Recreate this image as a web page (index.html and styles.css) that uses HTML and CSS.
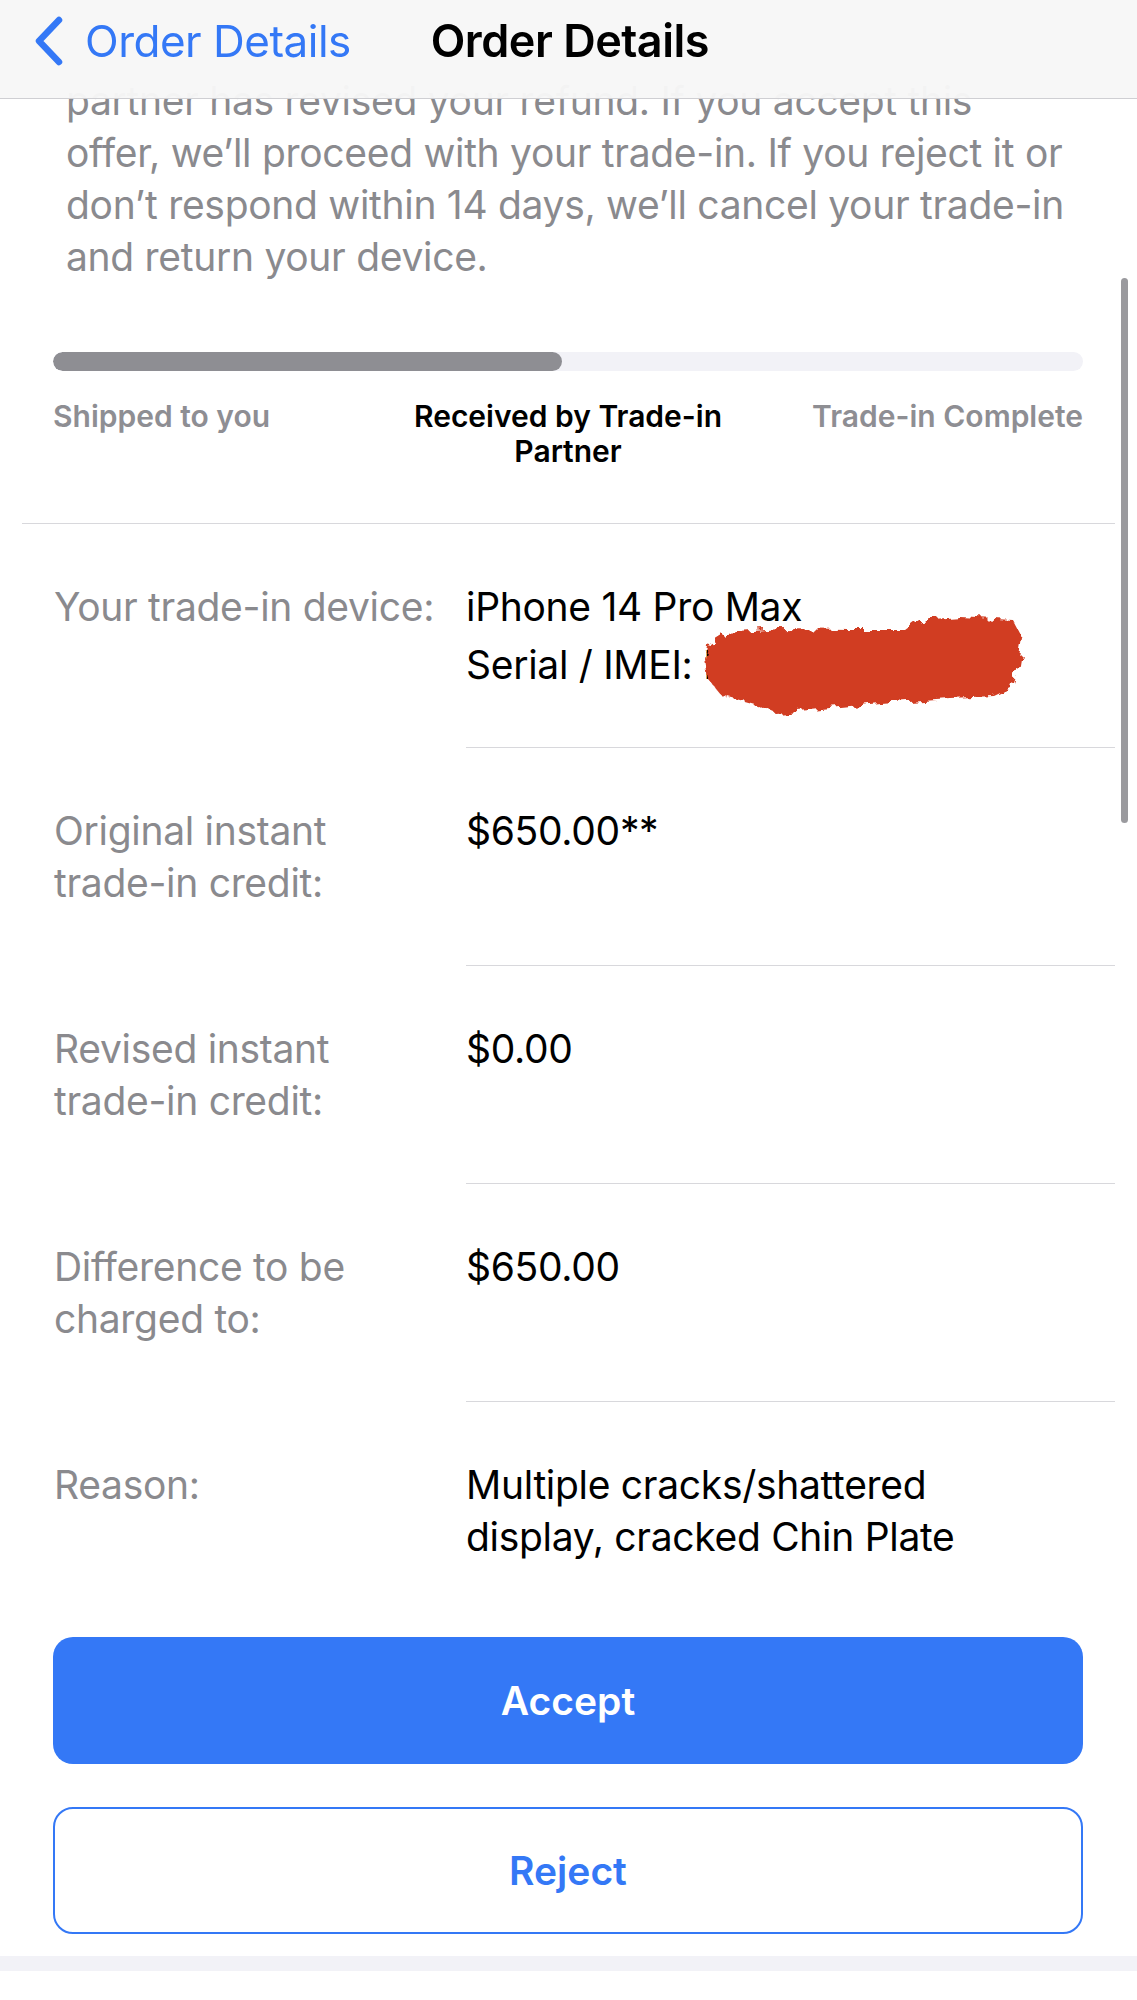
FILE: index.html
```html
<!DOCTYPE html>
<html>
<head>
    <title>Order Details</title>
    <link rel="stylesheet" href="styles.css">
</head>
<body>
    <div class="navbar">
        <a class="back" href="#">
            <svg class="chevron" width="30" height="50" viewBox="0 0 30 50">
                <path d="M25 4 L5 25 L25 46" fill="none" stroke="#3478f6" stroke-width="6.5" stroke-linecap="round" stroke-linejoin="round"/>
            </svg>
            <span>Order Details</span>
        </a>
        <div class="nav-title">Order Details</div>
    </div>

    <div class="scrollbar"></div>

    <div class="content">
        <p class="intro">partner has revised your refund. If you accept this offer, we’ll proceed with your trade-in. If you reject it or don’t respond within 14 days, we’ll cancel your trade-in and return your device.</p>

        <div class="progress">
            <div class="progress-fill" style="width: 49.4%"></div>
        </div>
        <div class="steps">
            <div class="step done">Shipped to you</div>
            <div class="step current">Received by Trade-in Partner</div>
            <div class="step todo">Trade-in Complete</div>
        </div>

        <div class="sep"></div>

        <div class="row">
            <div class="label">Your trade-in device:</div>
            <div class="value">
                <div>iPhone 14 Pro Max</div>
                <div class="serial">Serial / IMEI: N
                    <svg class="redact" width="340" height="115" viewBox="0 0 340 115">
                        <defs>
                            <filter id="rough" x="-10%" y="-10%" width="120%" height="120%">
                                <feTurbulence type="fractalNoise" baseFrequency="0.09" numOctaves="3" seed="4"/>
                                <feDisplacementMap in="SourceGraphic" scale="12"/>
                            </filter>
                        </defs>
                        <path filter="url(#rough)" fill="#d13c22" d="M14 34 L30 24 L85 20 L155 21 L210 21 L224 11 L265 8 L318 11 L328 30 L324 55 L316 79 L299 87 L255 89 L185 94 L115 101 L80 104 L60 95 L26 86 L13 70 L10 50 Z"/>
                    </svg>
                </div>
            </div>
        </div>
        <div class="sep inset"></div>

        <div class="row">
            <div class="label">Original instant trade-in credit:</div>
            <div class="value">$650.00**</div>
        </div>
        <div class="sep inset"></div>

        <div class="row">
            <div class="label">Revised instant trade-in credit:</div>
            <div class="value">$0.00</div>
        </div>
        <div class="sep inset"></div>

        <div class="row">
            <div class="label">Difference to be charged to:</div>
            <div class="value">$650.00</div>
        </div>
        <div class="sep inset"></div>

        <div class="row">
            <div class="label">Reason:</div>
            <div class="value">Multiple cracks/shattered display, cracked Chin Plate</div>
        </div>

        <div class="actions">
            <button class="btn btn-accept">Accept</button>
            <button class="btn btn-reject">Reject</button>
        </div>

        <div class="footer-band"></div>
    </div>
</body>
</html>
```

FILE: styles.css
```css
body {
    margin: 0;
    background: #fff;
    font-family: "Inter", "Liberation Sans", sans-serif;
    color: #000;
}

.navbar {
    position: fixed;
    top: 0;
    left: 0;
    right: 0;
    height: 99px;
    padding-bottom: 17px;
    box-sizing: border-box;
    background: rgba(247, 247, 247, 0.97);
    border-bottom: 1px solid #cfcfd3;
    display: flex;
    align-items: center;
    z-index: 2;
}

.back {
    display: flex;
    align-items: center;
    margin-left: 34px;
    color: #3478f6;
    text-decoration: none;
    font-size: 44px;
    letter-spacing: -0.5px;
}

.chevron {
    margin-right: 21px;
}

.nav-title {
    margin-left: 80px;
    font-size: 45px;
    font-weight: 600;
    letter-spacing: -0.5px;
}

.scrollbar {
    position: fixed;
    top: 278px;
    right: 9px;
    width: 7px;
    height: 545px;
    border-radius: 4px;
    background: #9a9a9e;
    z-index: 3;
}

.content {
    padding-top: 75px;
}

.intro {
    margin: 0 0 0 66px;
    width: 1010px;
    font-size: 39px;
    line-height: 52px;
    color: #8a8a8e;
    letter-spacing: -0.3px;
}

.progress {
    margin: 69px 54px 0 53px;
    height: 19px;
    border-radius: 10px;
    background: #f2f2f7;
    overflow: hidden;
}

.progress-fill {
    height: 100%;
    border-radius: 10px;
    background: #8e8e93;
}

.steps {
    display: grid;
    grid-template-columns: 1fr 1fr 1fr;
    margin: 28px 54px 0 53px;
    font-size: 30px;
    line-height: 35px;
    font-weight: 600;
}

.step.done {
    color: #8e8e93;
}

.step.current {
    text-align: center;
    margin: 0 -20px;
}

.step.todo {
    color: #8e8e93;
    text-align: right;
    white-space: nowrap;
}

.sep {
    height: 1px;
    background: #d8d8dc;
    margin: 54px 22px 0 22px;
}

.sep.inset {
    margin: 0 22px 0 466px;
}

.row {
    display: grid;
    grid-template-columns: 412px 1fr;
    padding: 56.5px 110px 56.5px 54px;
    font-size: 39px;
    line-height: 52px;
    letter-spacing: -0.3px;
}

.label {
    color: #8a8a8e;
    padding-right: 20px;
}

.value {
    color: #000;
}

.serial {
    position: relative;
    margin-top: 6px;
}

.redact {
    position: absolute;
    left: 229px;
    top: -30px;
}

.actions {
    display: flex;
    flex-direction: column;
    gap: 43px;
    margin: 18px 54px 0 53px;
}

.btn {
    height: 127px;
    border-radius: 20px;
    font-family: inherit;
    font-size: 39px;
    font-weight: 600;
    cursor: pointer;
}

.btn-accept {
    background: #3478f6;
    border: none;
    color: #fff;
}

.btn-reject {
    background: #fff;
    border: 2px solid #3478f6;
    color: #3478f6;
}

.footer-band {
    height: 15px;
    margin-top: 22px;
    background: #f2f2f7;
}
```
